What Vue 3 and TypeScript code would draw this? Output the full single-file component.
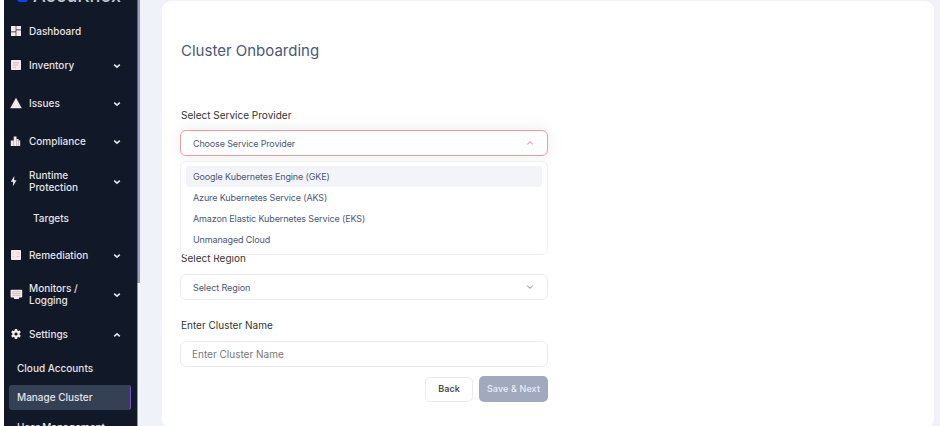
<script setup lang="ts">
import { ref } from 'vue'

type IconName = 'dashboard' | 'inventory' | 'issues' | 'compliance' | 'runtime' | 'remediation' | 'monitors' | 'settings'

interface NavItem {
  label: string
  icon?: IconName
  chevron?: 'down' | 'up'
  size: string
}

const navItems: NavItem[] = [
  { label: 'Dashboard', icon: 'dashboard', size: 'h35' },
  { label: 'Inventory', icon: 'inventory', chevron: 'down', size: 'h34' },
  { label: 'Issues', icon: 'issues', chevron: 'down', size: 'h41' },
  { label: 'Compliance', icon: 'compliance', chevron: 'down', size: 'h36' },
  { label: 'Runtime\nProtection', icon: 'runtime', chevron: 'down', size: 'h43' },
  { label: 'Targets', size: 'h32' },
  { label: 'Remediation', icon: 'remediation', chevron: 'down', size: 'h42' },
  { label: 'Monitors /\nLogging', icon: 'monitors', chevron: 'down', size: 'h36' },
  { label: 'Settings', icon: 'settings', chevron: 'up', size: 'h43' },
]

const settingsItems = ['Cloud Accounts', 'Manage Cluster', 'User Management']
const activeSetting = 'Manage Cluster'

const providers = [
  'Google Kubernetes Engine (GKE)',
  'Azure Kubernetes Service (AKS)',
  'Amazon Elastic Kubernetes Service (EKS)',
  'Unmanaged Cloud',
]
const highlighted = ref(0)
const provider = ref('Choose Service Provider')
const open = ref(true)
const clusterName = ref('')

function choose(name: string) {
  provider.value = name
  open.value = false
}
</script>

<template>
  <div class="page">
    <aside class="sidebar">
      <div class="brand">
        <div class="brand-inner">
          <span class="brand-mark"></span>
          <span class="brand-name">AccuKnox</span>
        </div>
      </div>
      <nav>
        <div v-for="item in navItems" :key="item.label" class="nav-item" :class="[item.size, { nested: !item.icon }]">
          <svg v-if="item.icon" class="nav-icon" viewBox="0 0 12 12">
            <path v-if="item.icon === 'dashboard'" d="M1 1h4.700v5.500H1zM6.300 1H11v3.500H6.300zM6.300 5.200H11V11H6.300zM1 7.200h4.700V11H1z" />
            <template v-else-if="item.icon === 'inventory'">
              <rect x="1" y="1" width="10" height="10" rx=".8" />
              <path class="cut" d="M3 3.800h6M3 6h5M3 8.200h3" />
            </template>
            <path v-else-if="item.icon === 'issues'" d="M6 .8 11.800 11.200H.2z" />
            <path v-else-if="item.icon === 'compliance'" d="M.8 5.500h2.700V11H.8zM3.700 1.500h2.800V11H3.700zM6.700 4h1.800v7H6.700zM8.700 5.500h1.500V11H8.700z" />
            <path v-else-if="item.icon === 'runtime'" d="M4.300 1 .8 6.800h2.400L2.900 11.200l3.600-5.900H4.100z" />
            <template v-else-if="item.icon === 'remediation'">
              <rect x="1" y="1" width="10" height="10" rx=".8" />
              <path class="cut faint" d="M2.800 4h1M2.800 7.500h1M6.500 4h3M6.500 7.500h3" />
            </template>
            <template v-else-if="item.icon === 'monitors'">
              <path d="M1.300 1.800h10.200q.7 0 .7.700v6.200q0 .7-.7.700H9V11H4V9.400H1.300q-.7 0-.7-.7V2.500q0-.7.700-.7z" />
              <path class="cut" d="M2.200 3.700h8.300M2.200 5.500h8.300M2.200 7.400h8.300" />
            </template>
            <path
              v-else
              fill-rule="evenodd"
              d="M4.900 1h2.200l.3 1.400.9.500 1.400-.5 1.100 1.900-1.100 1v1.400l1.100 1-1.100 1.900-1.400-.5-.9.500L7.100 11H4.900l-.3-1.400-.9-.5-1.400.5-1.100-1.900 1.100-1V5.300l-1.100-1 1.100-1.900 1.400.5.900-.5zM6 4.400a1.600 1.600 0 1 0 0 3.200 1.600 1.600 0 0 0 0-3.200z"
            />
          </svg>
          <span class="nav-label">{{ item.label }}</span>
          <svg v-if="item.chevron" class="nav-chevron" viewBox="0 0 8 6">
            <path :d="item.chevron === 'down' ? 'M1.200 1.700 4 4.200 6.800 1.700' : 'M1.200 4.300 4 1.800 6.800 4.300'" />
          </svg>
        </div>
      </nav>
      <div class="subnav">
        <div v-for="s in settingsItems" :key="s" class="sub-item" :class="{ active: s === activeSetting }">{{ s }}</div>
      </div>
    </aside>
    <div class="scrollbar"><div class="thumb"></div></div>

    <main class="content">
      <section class="card">
        <h1>Cluster Onboarding</h1>
        <div class="form">
          <label class="label">Select Service Provider</label>
          <div class="select-wrap">
            <div class="field focused" @click="open = !open">
              <span>{{ provider }}</span>
              <svg class="caret" viewBox="0 0 8 6"><path d="M1.200 4.300 4 1.700 6.800 4.300" /></svg>
            </div>
            <div v-if="open" class="menu">
              <div
                v-for="(p, i) in providers"
                :key="p"
                class="option"
                :class="{ highlighted: i === highlighted }"
                @mouseenter="highlighted = i"
                @click="choose(p)"
              >{{ p }}</div>
            </div>
          </div>

          <label class="label region-label">Select Region</label>
          <div class="field region-field">
            <span>Select Region</span>
            <svg class="caret" viewBox="0 0 8 6"><path d="M1.200 1.700 4 4.300 6.800 1.700" /></svg>
          </div>

          <label class="label name-label">Enter Cluster Name</label>
          <input v-model="clusterName" class="field input" type="text" placeholder="Enter Cluster Name" />

          <div class="actions">
            <button class="btn back">Back</button>
            <button class="btn next">Save &amp; Next</button>
          </div>
        </div>
      </section>
    </main>
  </div>
</template>

<style>
body {
  overflow: hidden;
  background: #fff;
}
</style>

<style scoped>
* {
  box-sizing: border-box;
}
.page {
  display: flex;
  height: 426px;
  padding-left: 4px;
  overflow: hidden;
  font-family: Inter, 'Liberation Sans', sans-serif;
  background: #fff;
}
.sidebar {
  width: 133px;
  flex: none;
  overflow: hidden;
  background: #111827;
  color: #e6e2e6;
}
.brand {
  height: 13px;
  overflow: hidden;
}
.brand-inner {
  display: flex;
  align-items: flex-start;
  gap: 5px;
  height: 22px;
  margin-top: -16px;
  padding-left: 13px;
}
.brand-mark {
  width: 11px;
  height: 12px;
  margin-top: 6px;
  border-radius: 3px;
  background: #0b45f5;
}
.brand-name {
  margin-top: 2px;
  font-size: 18px;
  line-height: 20px;
  font-weight: 500;
  color: #c3c6ce;
}
.nav-item {
  display: flex;
  align-items: center;
  padding: 0 16px 0 6px;
  font-size: 10px;
  line-height: 12px;
  font-weight: 500;
}
.h32 { height: 32px; }
.h34 { height: 34px; }
.h35 { height: 35px; }
.h36 { height: 36px; }
.h41 { height: 41px; }
.h42 { height: 42px; }
.h43 { height: 43px; }
.nested {
  padding-left: 29px;
}
.nav-icon {
  width: 12px;
  height: 12px;
  margin-right: 7px;
  flex: none;
  overflow: visible;
  fill: #f8e9e9;
}
.cut {
  fill: none;
  stroke: #b9aeb2;
  stroke-width: 0.7;
}
.faint {
  stroke: #cfc1c4;
}
.nav-label {
  flex: 1;
  white-space: pre-line;
}
.nav-chevron {
  width: 8px;
  height: 6px;
  margin-top: 2px;
  fill: none;
  stroke: #e9e5e8;
  stroke-width: 1.6;
}
.subnav {
  display: flex;
  flex-direction: column;
  gap: 5px;
  padding: 1px 6px 0 5px;
}
.sub-item {
  height: 25px;
  padding-left: 8px;
  flex: none;
  font-size: 10px;
  line-height: 25px;
  font-weight: 500;
  border-radius: 3px;
  white-space: nowrap;
}
.sub-item:first-child {
  height: 24px;
  line-height: 24px;
}
.active {
  border-right: 1px solid #7c4fd0;
  background: #344054;
}
.scrollbar {
  width: 3px;
  flex: none;
  background: linear-gradient(90deg, #8f96a3 0 1px, #f3f6fa 1px);
}
.thumb {
  height: 283px;
  background: linear-gradient(90deg, #5d6880 0 1px, #94a0b8 1px);
}
.content {
  flex: 1;
  padding: 1px 6px 0 22px;
  background: #eff3f9;
}
.card {
  height: 427px;
  padding: 40px 19px 0 18px;
  border-radius: 9px;
  background: #fff;
}
h1 {
  margin: 0;
  padding-left: 1px;
  font-size: 15px;
  line-height: 20px;
  font-weight: 400;
  color: #4a5875;
}
.form {
  display: flex;
  flex-direction: column;
  width: 368px;
  padding-top: 46px;
}
.label {
  height: 16px;
  padding-left: 1px;
  font-size: 10px;
  line-height: 16px;
  color: #333;
}
.select-wrap {
  position: relative;
  margin-top: 7px;
}
.field {
  display: flex;
  align-items: center;
  justify-content: space-between;
  width: 100%;
  height: 26px;
  padding: 0 13px 0 12px;
  border: 1px solid #e8ebf3;
  border-radius: 6px;
  background: #fff;
  color: #4a5875;
  font-size: 9px;
}
.focused {
  border-color: #eb9c9c;
  box-shadow: 0 0 18px rgba(0, 0, 0, 0.08);
  letter-spacing: -0.15px;
}
.caret {
  width: 8px;
  height: 6px;
  fill: none;
  stroke: #7c8497;
}
.focused .caret {
  stroke: #e07b7b;
}
.menu {
  position: absolute;
  z-index: 2;
  top: 31px;
  left: 0;
  width: 100%;
  height: 94px;
  padding: 4px 5px;
  border: 1px solid #eff0f5;
  border-radius: 6px;
  background: #fff;
}
.option {
  height: 21px;
  padding-left: 7px;
  border-radius: 3px;
  font-size: 9px;
  line-height: 21px;
  letter-spacing: -0.13px;
  color: #4a5875;
}
.highlighted {
  background: #f3f4fa;
}
.region-label {
  margin-top: 94px;
}
.region-field {
  margin-top: 8px;
  letter-spacing: -0.08px;
}
.name-label {
  margin-top: 17px;
}
.input {
  margin-top: 8px;
  padding-left: 11px;
  font-family: inherit;
  font-size: 10px;
  outline: none;
}
.input::placeholder {
  color: #777;
  opacity: 1;
}
.actions {
  display: flex;
  justify-content: flex-end;
  gap: 6px;
  margin-top: 9px;
}
.btn {
  height: 26px;
  padding: 0 0 2px;
  border-radius: 5px;
  font-family: inherit;
  font-size: 9px;
  font-weight: 500;
  letter-spacing: 0.12px;
}
.back {
  width: 48px;
  height: 25px;
  margin-top: 1px;
  border: 1px solid #ebebef;
  background: #fff;
  color: #333;
}
.next {
  width: 69px;
  border: 0;
  background: #a0a9be;
  color: #e9edf5;
}
</style>
